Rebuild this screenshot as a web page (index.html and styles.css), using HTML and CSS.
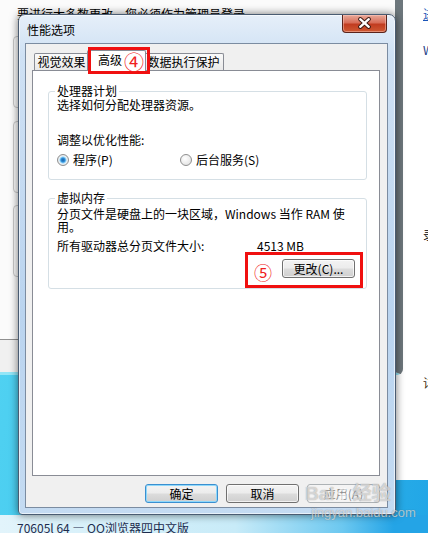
FILE: index.html
```html
<!DOCTYPE html>
<html lang="zh-CN">
<head>
    <meta charset="UTF-8">
    <title>性能选项</title>
    <link rel="stylesheet" href="styles.css">
</head>
<body>
<div class="screen">

    <!-- Windows behind the dialog -->
    <div class="page-window">
        <span class="page-frag frag-link">进</span>
        <span class="page-frag frag-w">W</span>
        <span class="page-frag frag-3">录</span>
        <span class="page-frag frag-4">详</span>
    </div>

    <div class="admin-window">
        <p class="admin-note">要进行大多数更改，您必须作为管理员登录</p>
        <div class="admin-card card-1"></div>
        <div class="admin-card card-2"></div>
        <div class="admin-card card-3"></div>
        <div class="admin-footer"></div>
    </div>

    <div class="taskbar">70605l 64 — QQ浏览器四中文版</div>

    <!-- Performance options dialog -->
    <div class="dialog" role="dialog" aria-labelledby="dlgTitle">
        <div class="titlebar">
            <span class="title" id="dlgTitle">性能选项</span>
            <button class="close-btn" aria-label="关闭">
                <svg width="45" height="18" viewBox="0 0 45 18">
                    <path d="M18 5 L27 13 M27 5 L18 13" stroke="#3a1812" stroke-width="4.4" stroke-linecap="round" fill="none"/>
                    <path d="M18 5 L27 13 M27 5 L18 13" stroke="#fff" stroke-width="2.4" stroke-linecap="round" fill="none"/>
                </svg>
            </button>
        </div>

        <div class="client">
            <div class="tabs">
                <div class="tab tab-visual">视觉效果</div>
                <div class="tab tab-advanced active">高级</div>
                <div class="tab tab-dep">数据执行保护</div>
            </div>

            <div class="panel">
                <fieldset class="group">
                    <legend>处理器计划</legend>
                    <p class="line">选择如何分配处理器资源。</p>
                    <p class="line line-gap">调整以优化性能:</p>
                    <div class="radios">
                        <label class="option option-first"><span class="radio checked"></span>程序(P)</label>
                        <label class="option"><span class="radio"></span>后台服务(S)</label>
                    </div>
                </fieldset>

                <fieldset class="group group-vm">
                    <legend>虚拟内存</legend>
                    <p class="wrap-text">分页文件是硬盘上的一块区域，Windows 当作 RAM 使<br>用。</p>
                    <div class="size-row">
                        <span class="size-label">所有驱动器总分页文件大小:</span>
                        <span class="size-value">4513 MB</span>
                    </div>
                    <div class="change-row">
                        <button class="btn">更改(C)...</button>
                    </div>
                </fieldset>
            </div>

            <div class="actions">
                <button class="btn default">确定</button>
                <button class="btn">取消</button>
                <button class="btn" disabled>应用(A)</button>
            </div>
        </div>
    </div>

    <!-- Annotations drawn over the screenshot -->
    <div class="redbox box-tab"></div>
    <div class="redbox box-change"></div>
    <span class="mark mark-4">④</span>
    <span class="mark mark-5">⑤</span>

    <div class="watermark">
        <div class="wm-logo">Bai<svg class="paw" width="14" height="14" viewBox="0 0 14 14"><ellipse cx="7" cy="9.5" rx="3.4" ry="3" /><circle cx="2.6" cy="5.8" r="1.6"/><circle cx="5.3" cy="2.6" r="1.6"/><circle cx="8.9" cy="2.6" r="1.6"/><circle cx="11.5" cy="5.8" r="1.6"/></svg>经验</div>
        <div class="wm-url">jingyan.baidu.com</div>
    </div>
</div>
</body>
</html>
```

FILE: styles.css
```css
/* Reset */
* {
    margin: 0;
    padding: 0;
    box-sizing: border-box;
}

body {
    width: 428px;
    height: 533px;
    overflow: hidden;
    font-family: "Noto Sans CJK SC", "Liberation Sans", sans-serif;
    font-size: 12px;
    color: #000;
}

.screen {
    position: relative;
    width: 428px;
    height: 533px;
    overflow: hidden;
    background: linear-gradient(100deg, #55d5f2 0%, #40c6ef 45%, #22a6e6 100%);
}

/* Background windows */
.page-window {
    position: absolute;
    left: 380px;
    top: 0;
    width: 60px;
    height: 480px;
    background: #fff;
}

.page-frag {
    position: absolute;
    left: 43px;
    line-height: 14px;
}

.frag-link { top: 7px; color: #1a55b8; text-decoration: underline; }
.frag-w    { top: 43px; color: #203a86; }
.frag-3    { top: 228px; }
.frag-4    { top: 376px; color: #3a2a10; }

.admin-window {
    position: absolute;
    left: 0;
    top: 0;
    width: 403px;
    height: 375px;
    background: #fbfbfb;
    border-right: 8px solid #6d777c;
    border-bottom: 3px solid #93e6f7;
    border-bottom-right-radius: 6px;
}

.admin-note {
    position: absolute;
    left: 17px;
    top: 7px;
    line-height: 14px;
    white-space: nowrap;
}

.admin-card {
    position: absolute;
    left: 13px;
    width: 100px;
    height: 72px;
    border: 1px solid #c9c9c9;
    border-radius: 4px;
}

.card-1 { top: 36px; }
.card-2 { top: 121px; }
.card-3 { top: 205px; }

.admin-footer {
    position: absolute;
    left: 0;
    right: 0;
    bottom: 0;
    height: 33px;
    background: #f0f0f0;
    border-top: 1px solid #8f8f8f;
}

.taskbar {
    position: absolute;
    left: 0;
    top: 515px;
    width: 428px;
    height: 18px;
    padding: 6px 0 0 17px;
    line-height: 14px;
    color: #1d2c4e;
    white-space: nowrap;
    overflow: hidden;
    background: linear-gradient(to right, #e2f4fb 0%, #c8ebf8 55%, #6cc8f0 80%, #24a4e6 92%);
}

/* Dialog frame */
.dialog {
    position: absolute;
    z-index: 1;
    left: 18px;
    top: 14px;
    width: 378px;
    height: 501px;
    display: flex;
    flex-direction: column;
    padding: 0 7px 6px 6px;
    border: 1px solid #4a5c72;
    border-radius: 7px 7px 4px 4px;
    background: linear-gradient(to bottom, #e6eff9 0%, #cfe1f4 8%, #bad4ef 60%, #c4dbf2 100%);
    box-shadow: 0 0 9px rgba(0, 0, 0, 0.55), inset 0 0 0 1px rgba(255, 255, 255, 0.6);
}

.titlebar {
    height: 28px;
    display: flex;
    align-items: center;
    padding-left: 2px;
}

.title {
    line-height: 14px;
    padding-top: 1px;
}

.close-btn {
    align-self: flex-start;
    margin-left: auto;
    margin-right: 1px;
    width: 45px;
    height: 18px;
    display: flex;
    border: 1px solid #5a231b;
    border-top: none;
    border-radius: 0 0 4px 4px;
    background: linear-gradient(to bottom, #e8a999 0%, #d86d58 45%, #c13c20 55%, #cf5a34 100%);
    box-shadow: inset 0 0 0 1px rgba(255, 210, 200, 0.45);
}

.close-btn svg {
    margin-top: -1px;
}

.client {
    flex: 1;
    display: flex;
    flex-direction: column;
    padding: 6px 7px 0 6px;
    background: #f0f0f0;
    border: 1px solid #7b8ca1;
}

/* Tabs */
.tabs {
    height: 20px;
    margin-left: 2px;
    display: flex;
    align-items: flex-end;
}

.tab {
    height: 17px;
    line-height: 16px;
    text-align: center;
    border: 1px solid #898c95;
    border-bottom: none;
    border-radius: 2px 2px 0 0;
    background: linear-gradient(to bottom, #fafafa, #e9e9e9);
}

.tab-visual   { width: 55px; }
.tab-advanced { width: 55px; }
.tab-dep      { width: 80px; border-left: none; }

.tab.active {
    position: relative;
    z-index: 1;
    width: 59px;
    height: 21px;
    margin: 0 -2px -1px;
    padding-left: 10px;
    text-align: left;
    line-height: 18px;
    background: #fff;
}

.panel {
    height: 406px;
    padding: 13px 12px 0 15px;
    background: #fff;
    border: 1px solid #898c95;
}

/* Group boxes */
.group {
    border: 1px solid #d5dfe5;
    border-radius: 3px;
    padding: 0 8px 12px 8px;
    min-width: 0;
}

.group legend {
    padding: 0 2px;
    margin-left: -2px;
    line-height: 14px;
}

.line {
    line-height: 14px;
}

.line-gap {
    margin-top: 21px;
}

.radios {
    display: flex;
    margin-top: 6px;
    line-height: 14px;
}

.option {
    display: flex;
    align-items: center;
    gap: 4px;
}

.option-first {
    width: 123px;
}

.radio {
    width: 12px;
    height: 12px;
    border: 1px solid #8f8f8f;
    border-radius: 50%;
    background: radial-gradient(circle at 40% 35%, #ffffff, #dcdcdc);
}

.radio.checked {
    background: radial-gradient(circle, #1d5fa5 0, #2f8fd8 2px, #8cd0f7 3px, #eef4f8 4px, #dadada 6px);
}

.group-vm {
    margin-top: 11px;
    padding-bottom: 10px;
}

.wrap-text {
    margin-top: 2px;
    line-height: 13px;
}

.size-row {
    display: flex;
    margin-top: 6px;
    line-height: 14px;
}

.size-label {
    width: 200px;
}

.change-row {
    display: flex;
    justify-content: flex-end;
    margin-top: 6px;
    padding-right: 3px;
}

/* Buttons */
.btn {
    width: 73px;
    height: 19px;
    font-family: inherit;
    font-size: 12px;
    line-height: 16px;
    color: #000;
    border: 1px solid #707070;
    border-radius: 3px;
    background: linear-gradient(to bottom, #f3f3f3 0%, #ececec 48%, #dcdcdc 52%, #cfcfcf 100%);
    box-shadow: inset 0 0 0 1px rgba(255, 255, 255, 0.7);
}

.btn.default {
    border-color: #3a8fd0;
    box-shadow: inset 0 0 0 1px #8fd8fa;
}

.btn:disabled {
    color: #8c8c8c;
    border-color: #adb2b5;
    background: #f4f4f4;
    box-shadow: none;
}

.actions {
    display: flex;
    justify-content: flex-end;
    gap: 8px;
    margin-top: 8px;
}

/* Red annotations, above the dialog */
.redbox {
    position: absolute;
    z-index: 2;
    border: 3px solid #f01010;
}

.box-tab {
    left: 88px;
    top: 47px;
    width: 62px;
    height: 27px;
}

.box-change {
    left: 245px;
    top: 252px;
    width: 118px;
    height: 36px;
}

.mark {
    position: absolute;
    z-index: 3;
    color: #f02020;
    line-height: 1;
}

.mark-4 {
    left: 124px;
    top: 52px;
    font-size: 20px;
}

.mark-5 {
    left: 254px;
    top: 263px;
    font-size: 18px;
}

/* Watermark */
.watermark {
    position: absolute;
    z-index: 3;
    left: 305px;
    top: 482px;
    color: rgba(255, 255, 255, 0.6);
    text-shadow: 0 0 1px rgba(60, 60, 60, 0.55);
}

.wm-logo {
    display: flex;
    align-items: center;
    font-family: "Liberation Sans", "Noto Sans CJK SC", sans-serif;
    font-size: 19px;
    font-weight: bold;
    line-height: 24px;
}

.paw {
    margin: 0 3px 0 1px;
    fill: rgba(255, 255, 255, 0.6);
}

.wm-url {
    margin-left: 6px;
    font-family: "Liberation Sans", sans-serif;
    font-size: 13px;
    line-height: 14px;
}
```
